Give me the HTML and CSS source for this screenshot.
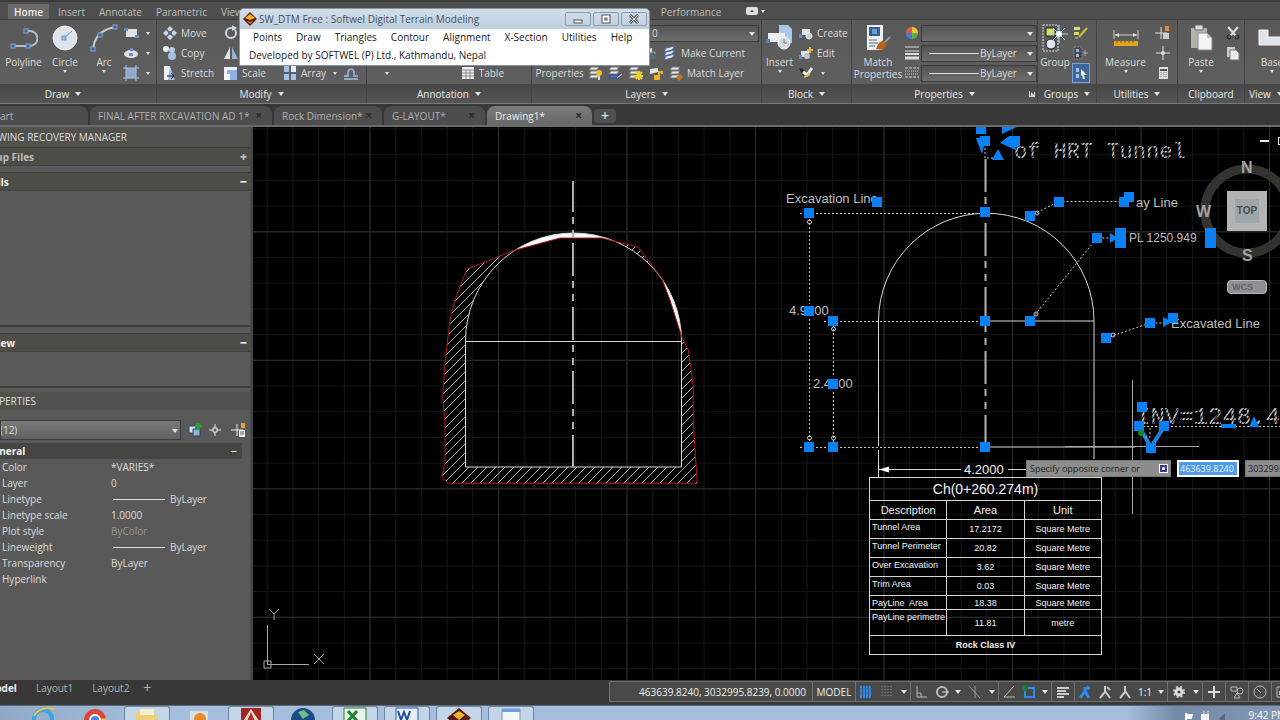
FILE: index.html
```
<!DOCTYPE html>
<html lang="en">
<head>
    <meta charset="UTF-8">
    <meta name="viewport" content="width=device-width, initial-scale=1.0">
    <title>Drawing1</title>
    <link rel="stylesheet" href="styles.css">
</head>
<body>
<div class="app">
    <!-- ribbon tabs -->
    <nav class="ribbon-tabs">
        <button class="rtab active">Home</button>
        <button class="rtab">Insert</button>
        <button class="rtab">Annotate</button>
        <button class="rtab">Parametric</button>
        <button class="rtab">View</button>
        <button class="rtab performance">Performance</button>
        <button class="rtab-toggle" aria-label="Minimize ribbon"><svg width="12" height="8"><rect width="12" height="8" rx="2" fill="#ddd"/><path d="M4 5l2-2 2 2z" fill="#444"/></svg><i class="caret small"></i></button>
    </nav>

    <div class="ribbon">
        <section class="panel p-draw">
            <div class="tools">
                <button class="big w-poly"><svg width="28" height="28"><path d="M3 22H20A7 7 0 0 0 20 7H15" fill="none" stroke="#aebdd0" stroke-width="2"/><g fill="#3f5f8c" stroke="#86a9d8"><rect x="1" y="20" width="4" height="4"/><rect x="16" y="20" width="4" height="4"/><rect x="14" y="5" width="4" height="4"/></g></svg><span>Polyline</span></button>
                <button class="big w-circle"><svg width="28" height="28"><circle cx="14" cy="14" r="12" fill="#dfe4ea" stroke="#f4f6f8"/><path d="M13 14l8-7" stroke="#6b93c9" stroke-width="1"/><rect x="11" y="12" width="4" height="4" fill="#9dbbe3" stroke="#6b93c9"/></svg><span>Circle</span><i class="caret small"></i></button>
                <button class="big w-arc"><svg width="28" height="28"><path d="M3 26C4 13 12 5 26 3" fill="none" stroke="#c3ccd8" stroke-width="2"/><g fill="#3f5f8c" stroke="#86a9d8"><rect x="1" y="23" width="4" height="4"/><rect x="8" y="9" width="4" height="4"/><rect x="23" y="1" width="4" height="4"/></g></svg><span>Arc</span><i class="caret small"></i></button>
                <div class="col">
                    <button class="tool" aria-label="Rectangle"><svg width="16" height="16"><path d="M3 4h11v8H3z" fill="#dde2e8"/><path d="M1 3h4v3H1zM12 10h4v3h-4z" fill="#5f8cc8"/></svg><i class="caret small"></i></button>
                    <button class="tool" aria-label="Ellipse"><svg width="16" height="16"><ellipse cx="8" cy="9" rx="7" ry="4" fill="#dde2e8"/><path d="M6 8h4v3H6zM7 3h3v3H7z" fill="#6f8fbd"/></svg><i class="caret small"></i></button>
                    <button class="tool" aria-label="Hatch"><svg width="16" height="16"><path d="M3 3h10v10H3z" fill="#8caad0"/><path d="M3 0v16M13 0v16M0 3h16M0 13h16" stroke="#a8c3e6"/></svg><i class="caret small"></i></button>
                </div>
            </div>
            <h2>Draw <i class="caret"></i></h2>
        </section>

        <section class="panel p-modify">
            <div class="tools">
                <div class="col c-move">
                    <button class="tool"><svg width="16" height="16"><path d="M8 1l3 3-3 3-3-3zM8 9l3 3-3 3-3-3zM1 8l3-3 3 3-3 3zM9 8l3-3 3 3-3 3z" fill="#cfd9e6"/><path d="M6 6h4v4H6z" fill="#57708f"/></svg>Move</button>
                    <button class="tool"><svg width="16" height="16"><circle cx="4" cy="4" r="3" fill="#eee"/><circle cx="10" cy="5" r="3" fill="#b9cbe2"/><circle cx="10" cy="11" r="4" fill="#a9c1e2"/></svg>Copy</button>
                    <button class="tool"><svg width="16" height="16"><path d="M2 1h6v14H2z" fill="#f2f2f2"/><path d="M8 1l5 14H6z" fill="#9dbce5"/><path d="M5 11h6M9 8l3 3-3 3" stroke="#111" fill="none"/></svg>Stretch</button>
                </div>
                <div class="col c-scale">
                    <button class="tool" aria-label="Rotate"><svg width="16" height="16"><circle cx="8" cy="8" r="5" fill="none" stroke="#cbd5e2" stroke-width="2"/><path d="M9 0l5 3-5 3z" fill="#cbd5e2"/></svg></button>
                    <button class="tool" aria-label="Mirror"><svg width="16" height="16"><path d="M7 2v12H1z" fill="#e0e4e9"/><path d="M9 2v12h6z" fill="#9ab4d6"/></svg></button>
                    <button class="tool"><svg width="16" height="16"><path d="M1 2h13v13H1z" fill="#8db2e6"/><path d="M1 2h13v3H4v10H1z" fill="#eef2f7"/><path d="M1 9h6v6H1z" fill="#f7f7f7"/></svg>Scale</button>
                </div>
                <div class="col c-array">
                    <button class="tool"><svg width="16" height="16"><path d="M2 1h5v6H2zM2 9h5v6H2zM9 9h5v6H9z" fill="#a3c0ea"/><path d="M9 1h5v6H9z" fill="#e6ebf2"/></svg>Array<i class="caret small"></i></button>
                </div>
                <div class="col">
                    <button class="tool" aria-label="Offset"><svg width="16" height="16"><path d="M1 14h14M1 11h4V8a3 4 0 1 1 6 0v3h4" fill="none" stroke="#8fa6c6" stroke-width="2"/></svg></button>
                </div>
            </div>
            <h2>Modify <i class="caret"></i></h2>
        </section>

        <section class="panel p-annotation">
            <div class="tools">
                <button class="tool" aria-label="Text"><i class="caret small"></i></button>
                <button class="tool"><svg width="16" height="16"><path d="M2 2h12v12H2z" fill="#f0f0f0"/><path d="M2 5h12M2 8h12M2 11h12M6 5v9M10 5v9" stroke="#8a8a8a"/></svg>Table</button>
            </div>
            <h2>Annotation <i class="caret"></i></h2>
        </section>

        <section class="panel p-layers">
            <div class="tools">
                <div class="drop"><select aria-label="Layer"><option>0</option></select></div>
                <div class="row">
                    <button class="tool" aria-label="Lock layer"><svg width="16" height="16"><path d="M2 4l8-1v4L2 9z" fill="#e6e6e6"/><path d="M8 9h6v5H8z" fill="#4f6c78"/><path d="M9 9V7h4v2" fill="none" stroke="#9ab"/></svg></button>
                    <button class="tool"><svg width="16" height="16"><path d="M4 3l9-2-3 4-8 2zM4 7l9-2-3 4-8 2zM4 11l9-2-3 4-8 2z" fill="#e2e6ec" stroke="#4c6995"/></svg>Make Current</button>
                </div>
                <div class="row last">
                    <button class="tool props-btn">Properties</button>
                    <button class="tool" aria-label="Layer off"><svg width="16" height="16"><path d="M3 2h8l-2 3H1zM3 6h8l-2 3H1zM3 10h8l-2 3H1z" fill="#e8e8e8" stroke="#777"/><circle cx="11" cy="8" r="3" fill="#f4bd2f"/><path d="M10 11h2v4h-2z" fill="#ddd"/></svg></button>
                    <button class="tool" aria-label="Isolate"><svg width="16" height="16"><path d="M3 2h8l-2 3H1z" fill="#eee" stroke="#777"/><path d="M3 6h8l-2 3H1z" fill="#eee" stroke="#777"/><path d="M3 10h8l-2 3H1z" fill="#4d7bd0" stroke="#2d4b90"/><path d="M9 13l5-4" stroke="#ddd"/></svg></button>
                    <button class="tool" aria-label="Freeze"><svg width="16" height="16"><path d="M3 2h8l-2 3H1zM3 6h8l-2 3H1zM3 10h8l-2 3H1z" fill="#e8e8e8" stroke="#777"/><path d="M11 6v9M6 11h9M8 7l6 7M14 7l-6 7" stroke="#f0cf35" stroke-width="2"/></svg></button>
                    <button class="tool" aria-label="Unlock layer"><svg width="16" height="16"><path d="M2 4l8-1v4L2 9z" fill="#e6e6e6"/><path d="M6 10h6v5H6z" fill="#e8b52b"/><path d="M11 10V7h3v2" fill="none" stroke="#e8b52b" stroke-width="2"/></svg></button>
                    <button class="tool"><svg width="16" height="16"><path d="M4 2h8l-2 3H2zM4 6h8l-2 3H2zM4 10h8l-2 3H2z" fill="#e8e8e8" stroke="#777"/><path d="M8 12l5-3 2 3-4 4z" fill="#c8742c"/></svg>Match Layer</button>
                </div>
            </div>
            <h2>Layers <i class="caret"></i></h2>
        </section>

        <section class="panel p-block">
            <div class="tools">
                <button class="big w-insert"><svg width="28" height="28"><path d="M13 1h9l4 4v14H13z" fill="#a9c7e8"/><path d="M2 9h17v9H2z" fill="#eceff3"/><path d="M0 15h4v4H0z" fill="#4d7dc4"/><circle cx="18" cy="19" r="6" fill="#d7dce2" stroke="#fff"/><path d="M18 15v4h3" fill="none" stroke="#777"/></svg><span>Insert</span><i class="caret small"></i></button>
                <div class="col">
                    <button class="tool"><svg width="16" height="16"><path d="M4 4h8v6H4z" fill="#dfe4ea"/><path d="M1 9h3v4H1z" fill="#5b8bd0"/><circle cx="11" cy="11" r="3" fill="#cbd2db" stroke="#f4f4f4"/></svg>Create</button>
                    <button class="tool"><svg width="16" height="16"><path d="M3 6h8v6H3z" fill="#dfe4ea"/><path d="M1 10h3v4H1z" fill="#5b8bd0"/><circle cx="9" cy="11" r="3" fill="#bcc5d0"/><path d="M12 2v6M9 5h6" stroke="#f0b53a" stroke-width="2"/></svg>Edit</button>
                    <button class="tool" aria-label="Edit attributes"><svg width="16" height="16"><path d="M1 3l4 1 4 8-4-1z" fill="#222"/><path d="M5 7l4 3 5-7" fill="none" stroke="#eee" stroke-width="3"/><path d="M6 12l6-3" stroke="#e3b44a" stroke-width="2"/></svg><i class="caret small"></i></button>
                </div>
            </div>
            <h2>Block <i class="caret"></i></h2>
        </section>

        <section class="panel p-props">
            <div class="tools">
                <button class="big w-match"><svg width="28" height="28"><path d="M3 1h16v25H3z" fill="#eef1f4"/><path d="M5 3h11v9H5z" fill="#2e5f94"/><path d="M8 5h5v5H8z" fill="#6d9cc9"/><path d="M5 16h8M5 19h9M5 22h6" stroke="#567"/><path d="M14 20l5-4 4 4-4 6-7-1z" fill="#b5651d"/><path d="M21 18l5-5" stroke="#999" stroke-width="2"/></svg><span>Match<br>Properties</span></button>
                <div class="col icons">
                    <svg width="14" height="14"><circle cx="7" cy="7" r="6" fill="#4caf50"/><path d="M7 7V1A6 6 0 0 1 13 7z" fill="#f2c230"/><path d="M7 7H1A6 6 0 0 1 7 1z" fill="#e0584e"/><path d="M7 7v6A6 6 0 0 1 1 7z" fill="#4a78d6"/><path d="M7 7h6a6 6 0 0 1-6 6z" fill="#58b04a"/></svg>
                    <svg width="14" height="14"><path d="M0 1h14M0 5h14" stroke="#ddd"/><path d="M0 8h14" stroke="#ddd" stroke-width="2"/><path d="M0 12h14" stroke="#ddd" stroke-width="3"/></svg>
                    <svg width="14" height="14"><path d="M0 2h14M0 11h14" stroke="#ccc" stroke-dasharray="3 1"/><path d="M0 5h14M0 8h14" stroke="#ccc" stroke-dasharray="1 1"/></svg>
                </div>
                <div class="col drops">
                    <div class="drop"><select aria-label="Object color"><option> </option></select></div>
                    <div class="drop line"><select aria-label="Lineweight"><option>ByLayer</option></select></div>
                    <div class="drop line"><select aria-label="Linetype"><option>ByLayer</option></select></div>
                </div>
            </div>
            <h2>Properties <i class="caret"></i><button class="launcher" aria-label="Properties palette"><svg width="6" height="6"><path d="M0 0h1v5h5v1H0zM2 1l3 3V1h1v4H2z" fill="#ddd"/></svg></button></h2>
        </section>

        <section class="panel p-groups">
            <div class="tools">
                <button class="big w-group"><svg width="28" height="28"><path d="M2 1h15v26H2z" fill="none" stroke="#ddd" stroke-dasharray="2 1"/><path d="M5 4h9v8H5z" fill="#d8dc6a" stroke="#222"/><circle cx="10" cy="20" r="5" fill="#dfe6ee" stroke="#222"/><path d="M18 1v18M9 10h18M12 4l12 12M24 4L12 16" stroke="#a8dcff"/><circle cx="18" cy="10" r="3" fill="#f2fbff"/></svg><span>Group</span></button>
                <div class="col">
                    <button class="tool" aria-label="Group edit"><svg width="16" height="16"><path d="M1 2h6v3H1zM1 7h5v3H1z" fill="#d8dc6a"/><path d="M6 12l8-9" stroke="#d9b93a" stroke-width="2"/><path d="M2 13h3" stroke="#ccc"/></svg></button>
                    <button class="tool" aria-label="Ungroup"><svg width="16" height="16"><path d="M1 2h8v12H1z" fill="#3e4652" stroke="#888" stroke-dasharray="2 1"/><path d="M3 4h3v3H3zM3 9h3v3H3z" fill="#9fb4cf"/><path d="M10 8h5M12 5v6" stroke="#aaa"/></svg></button>
                    <button class="tool on" aria-label="Group selection"><svg width="16" height="16"><path d="M3 3h3v4H3zM3 9h3v4H3z" fill="#a5c5ef"/><path d="M8 4l6 6-3 0 1 4-2 0-1-4-1 1z" fill="#f4f4c0"/></svg></button>
                </div>
            </div>
            <h2>Groups <i class="caret"></i></h2>
        </section>

        <section class="panel p-utils">
            <div class="tools">
                <button class="big w-measure"><svg width="28" height="28"><path d="M2 6v9M26 6v9M3 11h22" stroke="#ccc" stroke-width="1"/><path d="M3 11l4-2v4zM25 11l-4-2v4z" fill="#ddd"/><path d="M2 17h24v5H2z" fill="#e2a51d"/><path d="M5 17v2M9 17v2M13 17v2M17 17v2M21 17v2" stroke="#8a6200"/></svg><span>Measure</span><i class="caret small"></i></button>
                <div class="col">
                    <button class="tool" aria-label="Quick select"><svg width="16" height="16"><path d="M6 2v12M0 8h12" stroke="#ddd"/><path d="M10 1h4v5h-4z" fill="#e58b3a"/><path d="M8 8h6v6H8z" fill="#ccc"/></svg></button>
                    <button class="tool" aria-label="ID point"><svg width="16" height="16"><path d="M8 1v14M1 8h14" stroke="#e2e2e2"/><circle cx="8" cy="8" r="2" fill="#ddd"/></svg></button>
                    <button class="tool" aria-label="Calculator"><svg width="16" height="16"><path d="M4 2h9v12H4z" fill="#ddd"/><path d="M5 4h7v2H5z" fill="#555"/><path d="M6 7v6M9 7v6M11 7v6" stroke="#777" stroke-dasharray="1 1"/></svg></button>
                </div>
            </div>
            <h2>Utilities <i class="caret"></i></h2>
        </section>

        <section class="panel p-clip">
            <div class="tools">
                <button class="big w-paste"><svg width="28" height="28"><path d="M4 4h16v20H4z" fill="#b5b2aa"/><path d="M8 1h8v5H8z" fill="#ddd" stroke="#666"/><path d="M11 9h9l5 5v12H11z" fill="#f1f3f6" stroke="#8a8a8a"/><path d="M20 9v5h5z" fill="#b9c4d0"/></svg><span>Paste</span><i class="caret small"></i></button>
                <div class="col">
                    <button class="tool" aria-label="Cut"><svg width="16" height="16"><path d="M3 2l8 9M13 2l-8 9" stroke="#ddd" stroke-width="2"/><circle cx="4" cy="12" r="2" fill="none" stroke="#222"/><circle cx="12" cy="12" r="2" fill="none" stroke="#222"/></svg></button>
                    <button class="tool" aria-label="Copy clip"><svg width="16" height="16"><path d="M2 2h8v10H2z" fill="#ccc"/><path d="M5 5h6l3 3v7H5z" fill="#eee" stroke="#777"/></svg></button>
                </div>
            </div>
            <h2>Clipboard</h2>
        </section>

        <section class="panel p-view">
            <div class="tools">
                <button class="big w-base"><svg width="28" height="28"><path d="M1 6h9v7h18v8H1z" fill="#dfe4ec" stroke="#f5f5f5"/></svg><span>Base</span><i class="caret small"></i></button>
            </div>
            <h2>View <i class="caret"></i></h2>
        </section>
    </div>

    <!-- open drawings -->
    <nav class="file-tabs">
        <button class="ftab f-start">Start</button>
        <button class="ftab f-final">FINAL AFTER RXCAVATION AD 1*<b>×</b></button>
        <button class="ftab f-rock">Rock Dimension*<b>×</b></button>
        <button class="ftab f-layout">G-LAYOUT*<b>×</b></button>
        <button class="ftab f-drawing active">Drawing1*<b>×</b></button>
        <button class="ftab-add" aria-label="New drawing">+</button>
    </nav>

    <main class="workspace">
        <aside class="palettes">
            <h3 class="pal-title"><span class="cut-drawing">DRAWING RECOVERY MANAGER</span></h3>
            <div class="group-head dim"><span class="cut-backup">Backup Files</span><b>+</b></div>
            <div class="group-head"><span class="cut-details">Details</span><b>−</b></div>
            <div class="group-body details"></div>
            <div class="group-head"><span class="cut-preview">Preview</span><b>−</b></div>
            <div class="group-body preview"></div>
            <h3 class="pal-title props-title"><span class="cut-props">PROPERTIES</span></h3>
            <div class="picker">
                <div class="drop"><select aria-label="Selection"><option>All (12)</option></select></div>
                <button class="tool" aria-label="Toggle PICKADD"><svg width="16" height="16"><path d="M2 4h7v7H2z" fill="#cfe0f4" stroke="#345"/><path d="M6 7h7v7H6z" fill="#8fb2dd" stroke="#345"/><path d="M11 1v7M8 4h7" stroke="#25a03a" stroke-width="3"/></svg></button>
                <button class="tool" aria-label="Select objects"><svg width="16" height="16"><path d="M8 2v12M2 8h12" stroke="#eee"/><path d="M6 6h4v4H6z" fill="#555" stroke="#eee"/></svg></button>
                <button class="tool" aria-label="Quick select"><svg width="16" height="16"><path d="M6 2v12M0 8h12" stroke="#eee"/><path d="M10 1h4v5h-4z" fill="#e0a040"/><path d="M8 8h6v7H8z" fill="#eee"/><path d="M9 10h4M9 12h4" stroke="#666"/></svg></button>
            </div>
            <table class="props">
                <thead><tr><th><span class="cut-general">General</span></th><th class="minus">−</th></tr></thead>
                <tbody>
                    <tr><td>Color</td><td>*VARIES*</td></tr>
                    <tr><td>Layer</td><td>0</td></tr>
                    <tr><td>Linetype</td><td><i class="rule"></i>ByLayer</td></tr>
                    <tr><td>Linetype scale</td><td>1.0000</td></tr>
                    <tr><td>Plot style</td><td class="off">ByColor</td></tr>
                    <tr><td>Lineweight</td><td><i class="rule"></i>ByLayer</td></tr>
                    <tr><td>Transparency</td><td>ByLayer</td></tr>
                    <tr><td>Hyperlink</td><td></td></tr>
                </tbody>
            </table>
        </aside>

        <div class="canvas">
            <svg class="drawing" width="100%" height="100%">
                <defs>
                    <pattern id="minor" x="112.5" y="102.8" width="25.7" height="25.7" patternUnits="userSpaceOnUse"><path d="M.5 0V26M0 .5H26" stroke="#121518"/></pattern>
                    <pattern id="major" x="112.5" y="102.8" width="128.5" height="128.5" patternUnits="userSpaceOnUse"><path d="M.5 0V129M0 .5H129" stroke="#2b2d31"/></pattern>
                    <pattern id="hatch" width="9" height="9" patternUnits="userSpaceOnUse"><path d="M-1 10L10 -1M-1 1L1 -1M8 10L10 8" stroke="#b4b4b4"/></pattern>
                    <pattern id="stipple" width="3" height="3" patternUnits="userSpaceOnUse" patternTransform="rotate(35)"><rect width="2" height="3" fill="#c4c4c4"/></pattern>
                    <path id="bore" d="M465.500 467V341A108 108 0 0 1 681.500 341V467Z"/>
                    <path id="dug" d="M466.700 269.300L496.700 257.300 511.700 251 560 238H601.700L616.700 241.700 638.300 247.300 650 262.700 661.700 278.300 670 300 681.700 336.700 688.300 350 693.300 386.700V423L697.300 483.300H448.300L441.700 477.300 445 463.300V423L442.700 396.700 445 363.300 450 320 454 303Z"/>
                    <mask id="notBore"><rect x="253" y="127" width="1027" height="553" fill="#fff"/><use href="#bore" fill="#000"/></mask>
                    <mask id="notDug"><rect x="253" y="127" width="1027" height="553" fill="#fff"/><use href="#dug" fill="#000"/></mask>
                    <rect id="grip" x="-5" y="-5" width="10" height="10"/>
                </defs>
                <g transform="translate(-253 -127)">
                    <rect x="253" y="127" width="3000" height="2000" fill="url(#minor)"/>
                    <rect x="253" y="127" width="3000" height="2000" fill="url(#major)"/>
                    <circle cx="1247" cy="211" r="42" fill="none" stroke="#35332f" stroke-width="9"/>

                    <!-- excavated section -->
                    <use href="#dug" fill="url(#hatch)" mask="url(#notBore)"/>
                    <use href="#bore" fill="#fff" mask="url(#notDug)"/>
                    <path d="M465.500 341V467H681.500V341M465.500 341.500H682" class="ln"/>
                    <path d="M465.500 341A108 108 0 0 1 681.500 341" class="ln"/>
                    <use href="#dug" fill="none" stroke="#b01a1c"/>
                    <path d="M573 181V467" class="center" stroke-dashoffset="2"/>

                    <!-- design section -->
                    <path d="M878.500 446V321A107.500 107.500 0 0 1 1094 321V459M878.500 450V478M985 321H1094M985 447H1135" class="ln"/>
                    <path d="M985.500 159V447" class="center"/>
                    <path d="M800 213.500H980M824 321.500H980M800 447.500H980M809.500 215V304M809.500 319V447M833.500 321V376M833.500 392V447M1030 321L1097 238H1113M1030 216L1059 201.500H1124M1106 338L1150 323H1166M1139 426.500H1280M985 140V158H996" class="dots"/>
                    <path d="M878 469.500H961M1008 469.500H1026" class="ln"/>
                    <path d="M879 469.500l10-3v6z" fill="#fff"/>
                    <g class="heads"><circle cx="809.500" cy="222" r="2"/><circle cx="833.500" cy="329" r="2"/><circle cx="809.500" cy="438" r="2"/><circle cx="833.500" cy="438" r="2"/><circle cx="1036" cy="314" r="2"/><circle cx="1037" cy="213" r="2"/><circle cx="1113" cy="335" r="2"/></g>

                    <g class="label">
                        <text x="786" y="203">Excavation Line</text>
                        <text x="1136" y="207">ay Line</text>
                        <text x="1171" y="328">Excavated Line</text>
                        <text x="789" y="315">4.9500</text>
                        <text x="813" y="388">2.4500</text>
                        <text x="964" y="474" class="bright">4.2000</text>
                        <text x="1129" y="242" class="pl">PL 1250.949</text>
                    </g>
                    <text x="1014" y="158" class="dotted">of HRT Tunnel</text>
                    <text x="1136" y="424" class="dotted large">INV=1248.49</text>

                    <!-- crosshair -->
                    <path d="M1132.500 380V514M1065 446.500H1199" stroke="#a8a8a8" fill="none"/>

                    <g fill="#0a80f5">
                        <path d="M1141 430L1151 447 1164 427" fill="none" stroke="#2480d8" stroke-width="4"/>
                        <use href="#grip" x="809" y="213"/><use href="#grip" x="985" y="212"/><use href="#grip" x="877" y="202"/>
                        <use href="#grip" x="809" y="311"/><use href="#grip" x="833" y="321"/><use href="#grip" x="833" y="384"/>
                        <use href="#grip" x="809" y="447"/><use href="#grip" x="833" y="447"/><use href="#grip" x="985" y="447"/>
                        <use href="#grip" x="985" y="321"/><use href="#grip" x="1030" y="321"/><use href="#grip" x="1030" y="216"/>
                        <use href="#grip" x="1059" y="202"/><use href="#grip" x="1124" y="202"/><use href="#grip" x="1129" y="197"/>
                        <use href="#grip" x="1097" y="238"/><use href="#grip" x="1106" y="338"/><use href="#grip" x="1150" y="323"/>
                        <use href="#grip" x="1173" y="318"/><use href="#grip" x="1142" y="407"/><use href="#grip" x="1139" y="426"/>
                        <use href="#grip" x="1164" y="426"/><use href="#grip" x="1151" y="448"/><use href="#grip" x="981" y="129"/>
                        <use href="#grip" x="985" y="141"/>
                        <path d="M1115 228h11v20h-11zM1205 228h11v20h-11zM1110 233l8 5-8 5zM1163 317l9 5-9 5zM976 138h10l-4 16zM1000 143l9-7h11v11h-5l3 4zM1002 127h15l-15 7zM992 160l6-11 6 11zM1249 427l5-11 5 11zM1221 424h15v4h-15z"/>
                    </g>
                    <circle cx="1141" cy="433" r="3" fill="#138a1d"/>
                    <path d="M1145 437h5v-10" class="dots"/>

                    <!-- UCS icon -->
                    <path d="M267.500 625V664.500H309M264 661h7v7h-7zM314 654l10 10M324 654l-10 10M269 609l5 5 5-5M274 614v6" fill="none" stroke="#a9a9a9"/>
                </g>
            </svg>

            <table class="areas">
                <thead>
                    <tr class="r-title"><th colspan="3">Ch(0+260.274m)</th></tr>
                    <tr class="r-head"><th>Description</th><th>Area</th><th>Unit</th></tr>
                </thead>
                <tbody>
                    <tr><td>Tunnel Area</td><td>17.2172</td><td>Square Metre</td></tr>
                    <tr><td>Tunnel Perimeter</td><td>20.82</td><td>Square Metre</td></tr>
                    <tr><td>Over Excavation</td><td>3.62</td><td>Square Metre</td></tr>
                    <tr><td>Trim Area</td><td>0.03</td><td>Square Metre</td></tr>
                    <tr class="r-short"><td>PayLine&nbsp; Area</td><td>18.38</td><td>Square Metre</td></tr>
                    <tr class="r-tall"><td>PayLine perimetre</td><td>11.81</td><td>metre</td></tr>
                </tbody>
                <tfoot><tr><th colspan="3">Rock Class IV</th></tr></tfoot>
            </table>

            <form class="dyn-input">
                <label for="cornerX">Specify opposite corner or <i class="more"></i></label>
                <input id="cornerX" class="sel" type="text" value="463639.8240">
                <input class="gray" type="text" aria-label="Y" value="3032995.8239">
            </form>

            <div class="viewcube">
                <span class="n">N</span><span class="w">W</span><span class="s">S</span>
                <button class="top">TOP</button>
                <button class="wcs">WCS</button>
            </div>
            <div class="mdi"><i class="min"></i><i class="max"></i></div>
        </div>
    </main>

    <footer class="bottom">
        <div class="layouts">
            <button class="cut-model">Model</button><button>Layout1</button><button>Layout2</button><button>+</button>
        </div>
        <div class="status">
            <div class="g coords">463639.8240, 3032995.8239, 0.0000</div>
            <button class="g model">MODEL</button>
            <div class="g g-grid">
                <svg width="14" height="14"><path d="M2 1v12M5 1v12M8 1v12M11 1v12" stroke="#2f8af0" stroke-width="2"/><path d="M1 4h12M1 8h12" stroke="#2f6fc0"/></svg>
                <svg width="14" height="14"><path d="M2 1v12M5 1v12M8 1v12M11 1v12" stroke="#999" stroke-dasharray="1 2"/></svg>
                <i class="caret"></i>
            </div>
            <div class="g g-snap">
                <svg width="14" height="14"><path d="M3 1v11h10M3 8h4v4" fill="none" stroke="#bbb"/></svg>
                <svg width="14" height="14"><circle cx="7" cy="7" r="5" fill="none" stroke="#bbb" stroke-width="2"/><path d="M7 7h7" stroke="#ddd"/></svg>
                <i class="caret"></i>
                <svg width="14" height="14"><path d="M1 1l11 12M7 1v12" stroke="#999"/></svg>
                <i class="caret"></i>
            </div>
            <div class="g g-osnap">
                <svg width="14" height="14"><path d="M12 1L2 12h11" fill="none" stroke="#bbb"/></svg>
                <svg width="14" height="14"><path d="M3 3h9v9H3z" fill="none" stroke="#2f8af0" stroke-width="2"/><circle cx="3" cy="3" r="3" fill="#1a7a3a"/></svg>
                <i class="caret"></i>
            </div>
            <div class="g g-one"><svg width="14" height="14"><path d="M1 3h12M1 6h9M1 9h12M1 12h7" stroke="#ccc" stroke-width="2"/></svg></div>
            <div class="g g-scale">
                <svg width="14" height="14"><path d="M7 2v4L2 13M7 6l4 7" fill="none" stroke="#2f8af0" stroke-width="3"/><circle cx="10" cy="3" r="2" fill="#2f8af0"/></svg>
                <svg width="14" height="14"><path d="M7 1v6L2 13M7 6l5 7" fill="none" stroke="#ccc" stroke-width="2"/><path d="M9 2l3 3" stroke="#bbb" stroke-width="2"/></svg>
                <svg width="14" height="14"><path d="M7 1v6L2 13M7 6l5 7" fill="none" stroke="#ccc" stroke-width="2"/></svg>
                <span>1:1</span><i class="caret"></i>
            </div>
            <div class="g g-gear"><svg width="14" height="14"><circle cx="7" cy="7" r="3" fill="none" stroke="#ddd" stroke-width="3"/><circle cx="7" cy="7" r="5" fill="none" stroke="#ccc" stroke-width="2" stroke-dasharray="2 2"/></svg><i class="caret"></i></div>
            <div class="g g-one"><svg width="14" height="14"><path d="M7 1v12M1 7h12" stroke="#ddd" stroke-width="2"/></svg></div>
            <div class="g g-one"><svg width="14" height="14"><path d="M1 2h6v4H1zM4 13l3-5 3 5z" fill="none" stroke="#bbb"/><circle cx="10" cy="6" r="3" fill="none" stroke="#bbb"/></svg></div>
            <div class="g g-one"><svg width="14" height="14"><circle cx="7" cy="7" r="6" fill="none" stroke="#bbb"/><path d="M4 4l4 4" stroke="#bbb"/></svg></div>
            <div class="g g-one"><svg width="14" height="14"><path d="M1 2h12v10H1z" fill="none" stroke="#bbb"/><path d="M3 6h5v4H3z" fill="#bbb"/></svg></div>
        </div>
    </footer>

    <div class="taskbar">
        <span class="task"><svg width="26" height="14"><circle cx="13" cy="13" r="9" fill="none" stroke="#3aa5e0" stroke-width="4"/><path d="M4 10C8 2 22 0 24 4" fill="none" stroke="#e8c14a" stroke-width="2"/></svg></span>
        <span class="task"><svg width="26" height="14"><circle cx="13" cy="14" r="11" fill="#d9483b"/><path d="M13 14l11-2v6H13z" fill="#f4c430"/><circle cx="13" cy="14" r="5" fill="#4a86e0" stroke="#fff" stroke-width="2"/></svg></span>
        <span class="task open"><svg width="26" height="14"><path d="M2 5h9l2 2h11v7H2z" fill="#e8cf7d"/><path d="M6 2h14v6H6z" fill="#f5efcf"/></svg></span>
        <span class="task"><svg width="26" height="14"><path d="M4 5h18v9H4z" fill="#d6e0ea"/><circle cx="14" cy="13" r="6" fill="#ec8a2b"/></svg></span>
        <span class="task open"><svg width="26" height="14"><path d="M3 1h20v13H3z" fill="#a5271f"/><path d="M13 2l8 12H5z" fill="#e9e0dd"/><path d="M13 5l4 9H9z" fill="#b8322a"/></svg></span>
        <span class="task"><svg width="26" height="14"><circle cx="13" cy="14" r="12" fill="#1f4b86"/><path d="M8 6l6-2 5 5-6 4z" fill="#6cc08a"/></svg></span>
        <span class="task open"><svg width="26" height="14"><path d="M2 1h22v13H2z" fill="#e8f3e8" stroke="#2f7d3b"/><path d="M6 4l9 10M15 4L6 14" stroke="#22803a" stroke-width="3"/></svg></span>
        <span class="task open"><svg width="26" height="14"><path d="M2 1h22v13H2z" fill="#e7eefa" stroke="#2c57a5"/><path d="M4 4l3 9 3-8 3 8 3-9" fill="none" stroke="#214f9f" stroke-width="2"/></svg></span>
        <span class="task open"><svg width="26" height="14"><path d="M13 1l12 10-12 10L1 11z" fill="#5a1a12"/><path d="M7 8l6-4 6 4-6 5z" fill="#edb52b"/></svg></span>
        <span class="task open"><svg width="26" height="14"><path d="M4 2h18v12H4z" fill="#f3f6f9" stroke="#7d97b5"/><path d="M4 2h18v3H4z" fill="#6fa1d6"/></svg></span>
        <div class="tray"><svg width="50" height="14"><path d="M4 5h2v9H4zM6 6h6l-1 5H6z" fill="#fff"/><path d="M20 6h8v8h-8z" fill="#f2f2f2"/><path d="M23 3v4M27 3v4" stroke="#eee"/><path d="M38 11l6-6v9z" fill="#56697f"/></svg><time>9:42 PM</time></div>
    </div>
</div>

<!-- floating SW_DTM toolbar -->
<div class="dtm">
    <header>
        <svg width="14" height="14"><path d="M7 0l7 7-7 7-7-7z" fill="#6b1c10"/><path d="M2 6l5-4 5 4-5 2z" fill="#f0b428"/><path d="M4 9l3 1 3-1-3 3z" fill="#e08c1e"/></svg>
        <span>SW_DTM Free : Softwel Digital Terrain Modeling</span>
        <button aria-label="Minimize"><svg width="10" height="10"><rect x="1" y="6" width="8" height="3" fill="#fff" stroke="#555"/></svg></button>
        <button aria-label="Maximize"><svg width="10" height="10"><rect x="1" y="1" width="8" height="8" fill="#fff" stroke="#555"/><rect x="4" y="4" width="2" height="2" fill="none" stroke="#555"/></svg></button>
        <button aria-label="Close"><svg width="10" height="10"><path d="M1 1l8 8M9 1L1 9" stroke="#555" stroke-width="3"/><path d="M1 1l8 8M9 1L1 9" stroke="#fff"/></svg></button>
    </header>
    <nav><a href="#">Points</a><a href="#">Draw</a><a href="#">Triangles</a><a href="#">Contour</a><a href="#">Alignment</a><a href="#">X-Section</a><a href="#">Utilities</a><a href="#">Help</a></nav>
    <p>Developed by SOFTWEL (P) Ltd., Kathmandu, Nepal</p>
</div>
</body>
</html>
```
FILE: styles.css
```
* {
    box-sizing: border-box;
}

body {
    margin: 0;
    font-family: "Open Sans", "Noto Sans", sans-serif;
    font-size: 10px;
    line-height: 14px;
    color: #dcdcdc;
    background: #383838;
    overflow: hidden;
}

button, select, input {
    font: inherit;
    color: inherit;
    background: none;
    border: 0;
    padding: 0;
    margin: 0;
    white-space: nowrap;
}

h2, h3, p {
    margin: 0;
    font-size: 10px;
    font-weight: normal;
}

svg {
    display: block;
    flex: none;
}

.app {
    display: flex;
    flex-direction: column;
    height: 100vh;
}

.caret {
    display: inline-block;
    flex: none;
    border: 3px solid transparent;
    border-top: 4px solid #e4e4e4;
    border-bottom: 0;
    vertical-align: middle;
}

.caret.small {
    border-width: 3px 2px 0;
}

/* Ribbon */
.ribbon-tabs {
    display: flex;
    height: 20px;
    padding: 2px 0 0 8px;
    background: #4e4e4e;
    border-top: 2px solid #3a3a3a;
    border-bottom: 1px solid #3f3f3f;
    flex: none;
}

.rtab {
    padding: 0 7px;
    color: #bdbdbd;
    height: 15px;
}

.rtab.active {
    width: 41px;
    padding: 0 6px;
    font-weight: 600;
    color: #eee;
    background: #6a6a6a;
    margin-right: 2px;
}

.rtab.performance {
    margin-left: 404px;
}

.rtab-toggle {
    display: flex;
    align-items: center;
    gap: 3px;
    margin-left: 18px;
    height: 14px;
}

.ribbon {
    display: flex;
    height: 84px;
    overflow: hidden;
    background: #595959;
    border-bottom: 1px solid #777;
    flex: none;
}

.panel {
    display: flex;
    flex-direction: column;
    flex: none;
    border-right: 1px solid #434343;
}

.tools {
    display: flex;
    height: 64px;
    padding-top: 3px;
    background: linear-gradient(#595959, #5f5f5f);
}

.panel h2 {
    position: relative;
    flex: 1;
    display: flex;
    align-items: center;
    justify-content: center;
    gap: 6px;
    color: #e8e8e8;
    background: linear-gradient(#474747, #555);
}

.p-draw { width: 189px; margin-left: -32px; }
.p-draw .tools { padding-left: 35px; }
.p-draw h2 { padding-left: 2px; }
.p-modify { width: 210px; }
.p-modify .tools { padding-left: 4px; }
.p-annotation { width: 165px; }
.p-annotation .tools { padding: 43px 26px 0 13px; justify-content: space-between; }
.p-layers { width: 230px; }
.p-layers .tools { flex-direction: column; align-items: flex-end; padding-right: 2px; }
.p-block { width: 90px; }
.p-props { width: 186px; }
.p-groups { width: 59px; }
.p-utils { width: 81px; }
.p-clip { width: 67px; }
.p-view { width: 90px; }
.p-view h2 { justify-content: flex-start; padding-left: 4px; }

.big {
    display: flex;
    flex-direction: column;
    align-items: center;
    flex: none;
    height: 60px;
    padding-top: 1px;
    line-height: 12px;
}

.big span {
    margin-top: 4px;
}

.big .caret {
    margin-top: 2px;
}

.w-poly { width: 41px; }
.w-circle { width: 42px; }
.w-arc { width: 36px; }
.w-insert { width: 35px; }
.w-match { width: 52px; }
.w-group { width: 34px; }
.w-measure { width: 57px; }
.w-paste { width: 46px; }
.w-base { width: 54px; }

.col {
    display: flex;
    flex-direction: column;
}

.c-move { width: 61px; }
.c-scale { width: 59px; }
.c-array { width: 61px; }
.c-array, .c-array + .col { padding-top: 40px; }

.tool {
    display: flex;
    align-items: center;
    gap: 3px;
    height: 20px;
    padding: 0 1px;
}

.tool .caret {
    margin-left: 4px;
}

.tool.on {
    background: #3f659f;
    outline: 1px solid #7ba0d8;
    outline-offset: -1px;
}

.row {
    display: flex;
    width: 226px;
    justify-content: flex-end;
    padding-right: 13px;
    gap: 2px;
}

.row.last {
    padding-right: 14px;
}

.drop {
    position: relative;
    height: 17px;
    border: 1px solid #3c3c3c;
    background: linear-gradient(#555, #6c6c6c);
}

.drop select {
    display: block;
    appearance: none;
    width: 100%;
    height: 15px;
    line-height: 15px;
    padding: 0 4px;
}

.drop::after {
    content: "";
    position: absolute;
    right: 3px;
    top: 6px;
    border: 3px solid transparent;
    border-top: 4px solid #e4e4e4;
    border-bottom: 0;
}

.p-layers .drop {
    width: 120px;
    margin: 2px 0 1px;
}

.p-layers .drop select {
    padding-left: 12px;
}

.icons {
    width: 17px;
    gap: 6px;
    padding: 3px 0 0 1px;
}

.drops {
    flex: 1;
    gap: 3px;
    padding-top: 2px;
}

.drop.line select {
    padding-left: 58px;
}

.drop.line::before {
    content: "";
    position: absolute;
    left: 7px;
    top: 7px;
    width: 50px;
    height: 1px;
    background: #ddd;
}

.launcher {
    position: absolute;
    right: 2px;
    bottom: 6px;
}

/* File tabs */
.file-tabs {
    display: flex;
    align-items: flex-end;
    height: 23px;
    padding-right: 10px;
    background: #383838;
    border-bottom: 2px solid #6b6b6b;
    overflow: hidden;
    flex: none;
}

.ftab {
    display: flex;
    align-items: center;
    justify-content: space-between;
    height: 19px;
    padding: 0 10px 0 8px;
    color: #b0b0b0;
    background: #4d4d4d;
    border-radius: 8px 8px 0 0;
    margin-right: 2px;
    flex: none;
}

.ftab b {
    font-size: 12px;
    color: #2b2b2b;
}

.ftab.active {
    color: #ececec;
    background: linear-gradient(#7b7b7b, #686868);
}

.f-start { width: 108px; margin-left: -20px; padding-left: 11px; }
.f-final { width: 182px; }
.f-rock { width: 108px; }
.f-layout { width: 101px; }
.f-drawing { width: 105px; }

.ftab-add {
    width: 22px;
    height: 14px;
    margin-bottom: 2px;
    background: #505050;
    border-radius: 4px;
    font-size: 14px;
    font-weight: 600;
}

/* Palettes */
.workspace {
    display: flex;
    flex: 1;
    min-height: 0;
}

.palettes {
    width: 253px;
    flex: none;
    overflow: hidden;
    background: #595959;
    border-right: 3px solid #474747;
}

.pal-title {
    height: 20px;
    line-height: 21px;
    background: #50504d;
    white-space: nowrap;
}

.group-head {
    display: flex;
    align-items: center;
    justify-content: space-between;
    height: 19px;
    padding-right: 3px;
    font-weight: 700;
    color: #f0f0f0;
    background: #4d4d48;
    border-top: 1px solid #3c3c39;
    border-bottom: 1px solid #42423f;
}

.group-head.dim {
    color: #bbb;
    margin-bottom: 6px;
}

.group-head b {
    font-size: 12px;
}

.group-body {
    background: #5a5a5a;
    border-bottom: 2px solid #3d3d3a;
}

.details { height: 136px; margin-bottom: 6px; }
.preview { height: 36px; margin-bottom: 4px; }

.props-title {
    height: 18px;
    line-height: 18px;
    margin-bottom: 10px;
}

/* palette text that runs off the left screen edge */
.cut-drawing { margin-left: -22px; }
.cut-backup { margin-left: -28px; }
.cut-details { margin-left: -26px; }
.cut-preview { margin-left: -25px; }
.cut-props { margin-left: -21px; }
.cut-general { margin-left: -16px; }

.picker {
    display: flex;
    align-items: center;
    height: 20px;
    margin-bottom: 3px;
}

.picker .drop {
    width: 181px;
    height: 20px;
    margin-right: 5px;
    background: linear-gradient(#7a7a7a, #606060);
}

.picker .drop select {
    height: 18px;
    line-height: 18px;
    padding: 0;
    text-indent: -15px;
}

.picker .drop::after {
    right: 2px;
    top: 8px;
}

.picker .tool {
    width: 20px;
}

.picker .tool:last-child {
    margin-left: 4px;
}

table.props {
    width: 242px;
    border-collapse: collapse;
    table-layout: fixed;
}

.props td, .props th {
    height: 16px;
    padding: 0 0 0 2px;
    line-height: 15px;
    text-align: left;
    white-space: nowrap;
}

.props th {
    color: #f2f2f2;
    background: #454542;
}

.props th:first-child {
    width: 109px;
}

.props .minus {
    text-align: right;
    padding-right: 5px;
}

.props .off {
    color: #969696;
}

.rule {
    display: inline-block;
    width: 52px;
    height: 1px;
    margin: 0 5px 0 2px;
    background: #ddd;
    vertical-align: middle;
}

/* Drawing area */
.canvas {
    position: relative;
    flex: 1;
    overflow: hidden;
    background: #000;
    font-family: "Liberation Sans", Arial, sans-serif;
}

.drawing {
    position: absolute;
    inset: 0;
}

.ln {
    fill: none;
    stroke: #d8d8d8;
}

.center {
    stroke: #b0b0b0;
    stroke-width: 2;
    stroke-dasharray: 33 5 7 6 7 6;
}

.dots {
    fill: none;
    stroke: #c8c8c8;
    stroke-dasharray: 2 2;
}

.heads {
    fill: none;
    stroke: #ccc;
}

.label {
    font-size: 13px;
    fill: #bdbdbd;
}

.label .pl {
    font-size: 12px;
}

.label .bright {
    fill: #f0f0f0;
}

.dotted {
    font-family: "Liberation Mono", monospace;
    font-size: 22px;
    fill: url(#stipple);
}

.dotted.large {
    font-size: 24px;
}

.areas {
    position: absolute;
    left: 616px;
    top: 350px;
    width: 233px;
    border-collapse: collapse;
    table-layout: fixed;
    font-size: 9px;
    line-height: 10px;
    color: #f2f2f2;
}

.areas th, .areas td {
    height: 19px;
    padding: 0;
    border: 1px solid #d5d5d5;
    text-align: center;
    white-space: nowrap;
}

.areas td:first-child {
    padding: 2px 0 0 2px;
    text-align: left;
    vertical-align: top;
}

.areas .r-title th {
    height: 23px;
    font-size: 14px;
    font-weight: normal;
}

.areas .r-head th {
    font-size: 11px;
    font-weight: normal;
}

.areas .r-short td {
    height: 14px;
}

.areas .r-tall td {
    height: 26px;
}

.dyn-input {
    position: absolute;
    left: 773px;
    top: 333px;
    display: flex;
    gap: 6px;
    font-family: "Open Sans", sans-serif;
    font-size: 9px;
    color: #222;
}

.dyn-input label, .dyn-input input {
    height: 17px;
    line-height: 15px;
    border: 1px solid #777;
    background: #8d8d8d;
}

.dyn-input label {
    display: flex;
    align-items: center;
    justify-content: space-between;
    width: 145px;
    padding: 0 2px 0 3px;
    white-space: nowrap;
}

.dyn-input input {
    width: 62px;
    padding: 0 2px;
}

.dyn-input .sel {
    color: #e4f1ff;
    background: #4f9be8;
    border: 2px solid #fff;
    padding: 0 1px;
    line-height: 13px;
}

.more {
    width: 9px;
    height: 9px;
    border: 1px solid #fff;
    background: radial-gradient(#fff 1px, #3b3b9a 2px);
}

.viewcube {
    position: absolute;
    left: 946px;
    top: 31px;
    width: 96px;
    height: 140px;
    font-size: 16px;
    font-weight: bold;
    color: #a3a3a3;
}

.viewcube span {
    position: absolute;
}

.viewcube .n { left: 42px; top: 3px; }
.viewcube .w { left: -3px; top: 47px; }
.viewcube .s { left: 43px; top: 91px; }

.top {
    position: absolute;
    left: 28px;
    top: 33px;
    width: 40px;
    height: 40px;
    border: 8px solid #b3b3b3;
    background: #a2a5a8;
    font-size: 10px;
    font-weight: bold;
    color: #4a4e55;
}

.wcs {
    position: absolute;
    left: 28px;
    top: 122px;
    width: 40px;
    height: 14px;
    padding-left: 4px;
    border: 1px solid #b5b5bb;
    border-radius: 4px;
    background: #8f8f96;
    font-size: 9px;
    line-height: 12px;
    text-align: left;
    color: #62626a;
}

.mdi {
    position: absolute;
    left: 1007px;
    top: 10px;
    display: flex;
    align-items: center;
    gap: 9px;
}

.min {
    width: 9px;
    height: 2px;
    background: #eee;
}

.max {
    width: 8px;
    height: 8px;
    border: 1px solid #eee;
}

/* Status bar */
.bottom {
    display: flex;
    justify-content: space-between;
    height: 25px;
    background: #383838;
    padding: 1px 0 3px;
    overflow: hidden;
    flex: none;
}

.layouts {
    display: flex;
    align-items: flex-start;
    gap: 19px;
    color: #b5b5b5;
}

.cut-model {
    margin-left: -14px;
    font-weight: 700;
    color: #eee;
}

.layouts button:last-child {
    font-size: 14px;
    margin-left: -5px;
}

.status {
    display: flex;
    width: 671px;
    flex: none;
    overflow: hidden;
    background: #494947;
    border: 1px solid #707070;
    border-right: 0;
    color: #f0f0f0;
}

.g {
    display: flex;
    align-items: center;
    justify-content: space-around;
    flex: none;
    border-right: 1px solid #707070;
}

.coords { width: 203px; justify-content: flex-end; padding-right: 6px; }
.model { width: 43px; justify-content: center; }
.g-grid { width: 55px; }
.g-snap { width: 88px; }
.g-osnap { width: 53px; }
.g-scale { width: 93px; }
.g-gear { width: 35px; }
.g-one { width: 23px; }

/* Windows taskbar */
.taskbar {
    display: flex;
    height: 15px;
    padding-left: 20px;
    gap: 6px;
    overflow: hidden;
    background: linear-gradient(to right, #8fa9c6, #a6bedd 12%, #a6bedd 88%, #7389a6 92%, #8398b3);
    border-top: 1px solid #5d6c7f;
    flex: none;
}

.task {
    display: flex;
    justify-content: center;
    width: 46px;
    flex: none;
}

.task.open {
    background: #c4d5e8;
    border: 1px solid #6e86a3;
    border-bottom: 0;
    border-radius: 3px 3px 0 0;
}

.tray {
    display: flex;
    flex: none;
    gap: 18px;
    margin: 0 -6px 0 auto;
    padding-top: 2px;
    color: #fff;
}

/* SW_DTM window */
.dtm {
    position: absolute;
    left: 239px;
    top: 8px;
    width: 411px;
    height: 58px;
    background: #fff;
    border: 1px solid #8794a3;
    border-radius: 5px 5px 0 0;
    color: #1a1a1a;
    overflow: hidden;
}

.dtm header {
    display: flex;
    align-items: center;
    gap: 2px;
    height: 20px;
    padding: 0 2px 0 3px;
    background: linear-gradient(#d3dfeb, #bccddd);
    color: #45505c;
}

.dtm header span {
    flex: 1;
}

.dtm header button {
    display: flex;
    align-items: center;
    justify-content: center;
    width: 26px;
    height: 14px;
    border: 1px solid #8c9bab;
    border-radius: 2px;
}

.dtm nav {
    display: flex;
    gap: 14px;
    padding: 1px 0 0 13px;
    white-space: nowrap;
}

.dtm a {
    color: inherit;
    text-decoration: none;
}

.dtm p {
    padding: 4px 9px 0;
}
```
